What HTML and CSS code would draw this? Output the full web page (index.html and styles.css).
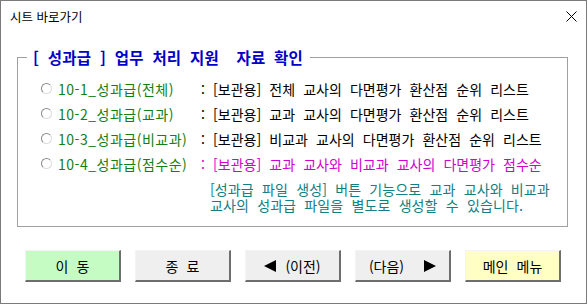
FILE: index.html
```html
<!DOCTYPE html>
<html lang="ko">
<head>
<meta charset="utf-8">
<title>시트 바로가기</title>
<link rel="stylesheet" href="styles.css">
</head>
<body>
<div class="window">
  <div class="titlebar">
    <span class="title">시트 바로가기</span>
    <svg class="close" width="11" height="11" viewBox="0 0 11 11"><path d="M0.5 0.5 L10.5 10.5 M10.5 0.5 L0.5 10.5" stroke="#000" stroke-width="1"/></svg>
  </div>
  <fieldset class="group">
    <legend class="legend">[ 성과급 ] 업무 처리 지원 &nbsp;자료 확인</legend>
    <div class="options">
      <span class="radio"></span><span class="label">10-1_성과급(전체)</span><span class="desc">: [보관용] 전체 교사의 다면평가 환산점 순위 리스트</span>
      <span class="radio"></span><span class="label">10-2_성과급(교과)</span><span class="desc">: [보관용] 교과 교사의 다면평가 환산점 순위 리스트</span>
      <span class="radio"></span><span class="label">10-3_성과급(비교과)</span><span class="desc">: [보관용] 비교과 교사의 다면평가 환산점 순위 리스트</span>
      <span class="radio"></span><span class="label">10-4_성과급(점수순)</span><span class="desc pink">: [보관용] 교과 교사와 비교과 교사의 다면평가 점수순</span>
    </div>
    <p class="note">[성과급 파일 생성] 버튼 기능으로 교과 교사와 비교과<br>교사의 성과급 파일을 별도로 생성할 수 있습니다.</p>
  </fieldset>
  <div class="buttons">
    <button class="btn green">이 동</button>
    <button class="btn">종 료</button>
    <button class="btn prev"><svg width="12" height="12" viewBox="0 0 12 12"><polygon points="12,0 12,12 0,6" fill="#000"/></svg><span>(이전)</span></button>
    <button class="btn next"><span>(다음)</span><svg width="12" height="12" viewBox="0 0 12 12"><polygon points="0,0 0,12 12,6" fill="#000"/></svg></button>
    <button class="btn yellow">메인 메뉴</button>
  </div>
</div>
</body>
</html>
```
FILE: styles.css
```css
* { box-sizing: border-box; }
html, body { margin: 0; padding: 0; background: #ffffff; }
body {
  font-family: "Noto Sans CJK KR", "Noto Sans", sans-serif;
  font-size: 14px;
  word-spacing: 0.3em;
  color: #000;
}
.window {
  width: 587px;
  height: 304px;
  border: 1px solid #7a7a7a;
  background: #fff;
  display: flex;
  flex-direction: column;
}
.titlebar {
  height: 30px;
  display: flex;
  align-items: center;
  justify-content: space-between;
  padding: 0 9px 0 9px;
}
.title {
  font-size: 12.5px;
  word-spacing: 0;
  color: #000;
}
.close { display: block; }
.group {
  margin: 16px 0 0 16px;
  width: 551px;
  height: 180px;
  border: 1px solid #a0a0a0;
  padding: 9px 0 0 23px;
}
.legend {
  margin-left: -14px;
  padding: 0 7px 0 6px;
  font-size: 15.5px;
  font-weight: bold;
  letter-spacing: 0.2px;
  color: #0000c8;
  line-height: 20px;
}
.options {
  display: grid;
  grid-template-columns: 11px 143px auto;
  column-gap: 6px;
  grid-auto-rows: 25px;
  align-items: center;
}
.radio {
  width: 11px;
  height: 11px;
  border-radius: 50%;
  border: 1px solid;
  border-color: #8a8a8a #dcdcdc #dcdcdc #8a8a8a;
  background: #fff;
}
.label { color: #138013; white-space: nowrap; letter-spacing: 0.5px; }
.desc { color: #000; margin-left: -6px; white-space: nowrap; }
.pink { color: #d000d0; }
.note {
  margin: 5px 0 0 169px;
  color: #108080;
  line-height: 16px;
  letter-spacing: 0.1px;
  white-space: nowrap;
}
.buttons {
  display: flex;
  gap: 14px;
  padding-left: 24px;
  margin-top: 23px;
}
.btn {
  width: 96px;
  height: 32px;
  font-family: "Noto Sans CJK KR", "Noto Sans", sans-serif;
  font-size: 14px;
  word-spacing: 0.3em;
  background: #efefef;
  border-style: solid;
  border-width: 1px 2px 2px 1px;
  border-color: #f4f4f4 #6e6e6e #6e6e6e #f4f4f4;
  padding: 0;
  display: flex;
  align-items: center;
  justify-content: center;
  color: #000;
}
.prev { gap: 9px; }
.next { gap: 20px; }
.green { background: #c4fcc4; }
.yellow { background: #ffffc4; }
```
